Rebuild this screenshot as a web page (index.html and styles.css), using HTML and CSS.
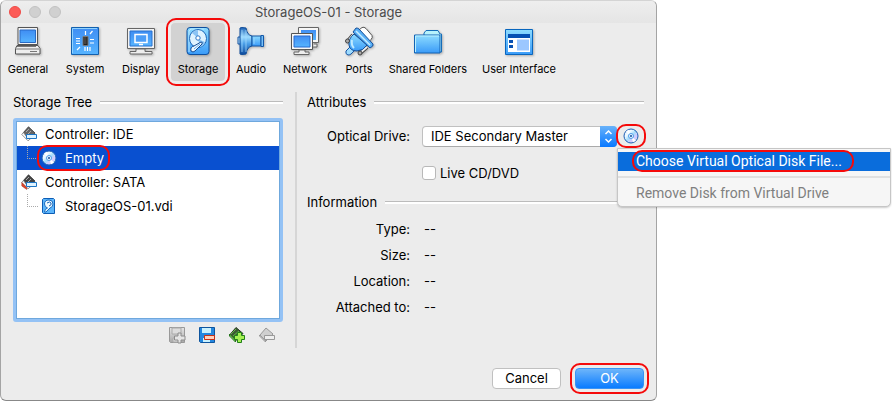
FILE: index.html
```html
<!DOCTYPE html>
<html lang="en">
<head>
<meta charset="utf-8">
<title>StorageOS-01 - Storage</title>
<link rel="stylesheet" href="styles.css">
</head>
<body>
<svg class="defs" aria-hidden="true">
  <defs>
    <linearGradient id="blue" x1="0" y1="0" x2="0" y2="1"><stop offset="0" stop-color="#3f8df3"/><stop offset="1" stop-color="#56b4ff"/></linearGradient>
    <linearGradient id="sky" x1="0" y1="0" x2="0" y2="1"><stop offset="0" stop-color="#8edcff"/><stop offset="1" stop-color="#3a9bf8"/></linearGradient>
    <linearGradient id="cone" x1="0" y1="0" x2="0" y2="1"><stop offset="0" stop-color="#1c62b6"/><stop offset=".35" stop-color="#9fdcff"/><stop offset=".6" stop-color="#4b9fe8"/><stop offset="1" stop-color="#0d4a9c"/></linearGradient>
    <linearGradient id="grey" x1="0" y1="0" x2="0" y2="1"><stop offset="0" stop-color="#e6e6e6"/><stop offset="1" stop-color="#a8a8a8"/></linearGradient>
    <linearGradient id="disc" x1="0" y1="0" x2="1" y2="1"><stop offset="0" stop-color="#b8d8ff"/><stop offset=".3" stop-color="#f4fbff"/><stop offset=".5" stop-color="#a5ddfb"/><stop offset=".7" stop-color="#d8c8ff"/><stop offset="1" stop-color="#9af0d8"/></linearGradient>
    <symbol id="cd" viewBox="0 0 16 16">
      <circle cx="8" cy="8" r="7" fill="url(#disc)" stroke="#1e5fb4"/>
      <path d="M8 8 3 3.500A7 7 0 0 1 6 2z" fill="#fff"/><path d="M8 8l5 4.500a7 7 0 0 1-3 1.500z" fill="#fff"/>
      <circle cx="8" cy="8" r="2.500" fill="#e8f6ff" stroke="#4e9be8"/><circle cx="8" cy="8" r="1" fill="#174a96"/>
    </symbol>
    <symbol id="disk" viewBox="0 0 28 28">
      <rect x="3" y=".5" width="22" height="27" rx="3" fill="url(#sky)" stroke="#0d4f9f"/>
      <path d="M5 25V4l2-2h13" fill="none" stroke="#b9e9ff"/>
      <ellipse cx="14" cy="11.500" rx="8.500" ry="9" fill="#dff3ff" stroke="#2069b8"/>
      <path d="M14 11 8 6q3-3 6-3zM14 12l7 3q-1 4-5 5z" fill="#8bc4f5"/>
      <circle cx="14" cy="11" r="2.200" fill="#fff" stroke="#2d78c8"/>
      <path d="M7 24q-1-4 3-5l7-4q2 0 1 2l-7 7q-2 2-4 0z" fill="#eaf7ff" stroke="#124b94"/>
      <path d="m10 22 6-5" stroke="#62a8e8"/>
    </symbol>
    <symbol id="disk-small" viewBox="0 0 16 16">
      <path d="M2.500.5h10l1 1v14h-11l-1-1v-13z" fill="#5bb5fb" stroke="#0d5db5"/>
      <path d="M8 2q4 0 4 4 0 3-3 4l-4 4H3.500q0-3 3-4-3-1-3-4 0-4 4.500-4z" fill="#eefaff" stroke="#1a6bc0"/>
      <path d="M6 5q3-2 4 0t-2 3" fill="none" stroke="#1a62b5"/>
    </symbol>
    <symbol id="controller" viewBox="0 0 16 16">
      <path d="M7.500.8 14 7l-3 4H4.500L2 7z" fill="currentColor" stroke="#333" stroke-width=".8"/>
      <path d="M2.500 6.500.8 8.500 7 14.800l3-2.500-3.500-.3z" fill="#fff" stroke="#777" stroke-width=".8"/>
      <path d="m5 6 3-3m-1 5 3-3" stroke="#aaa"/>
    </symbol>
  </defs>
</svg>

<main class="window">
  <header class="titlebar">
    <div class="lights"><i class="light close"></i><i class="light"></i><i class="light"></i></div>
    <h1>StorageOS-01 - Storage</h1>
  </header>

  <nav class="toolbar" aria-label="Settings pages">
    <button type="button"><svg viewBox="0 0 28 28">
      <path d="M4 .5h19.500v17H4z" fill="#f4f4f4" stroke="#555"/><path d="M6 3h15.500v12.500H6z" fill="url(#blue)" stroke="#286bc5"/>
      <path d="M3 18.500h21l2 3v5.500H1.500v-5.500z" fill="#eee" stroke="#555"/><path d="M2 22h23M16 24.500h7M3 19.500h19" stroke="#777"/>
    </svg><span>General</span></button>
    <button type="button"><svg viewBox="0 0 28 28">
      <path d="M.5.5h27v27H.5z" fill="url(#blue)" stroke="#1260ae"/><path d="M1.500 26V1.500H26" fill="none" stroke="#8fd2ff"/>
      <path d="M12 9.500h5v9h-5z" fill="#222" stroke="#777"/><path d="M12.500 10h3v7h-3z" fill="#474440"/>
      <path d="M5 11.500h4M5 14h4M5 16.500h4M19 12.500h4M19 16h4M14.500 4v4M19 7l2.500-3M6 23l3-3M14 20v4M16.500 20v4M19 20v4" stroke="#fff" stroke-width="1.200"/>
    </svg><span>System</span></button>
    <button type="button"><svg viewBox="0 0 28 28">
      <path d="M.5 1.500h27v20H.5z" fill="#f2f2f2" stroke="#666"/><path d="M3 4h22v15H3z" fill="url(#blue)" stroke="#2670ce"/>
      <path d="M8 7.500h12v8H8z" fill="#4c9df7" stroke="#fff" stroke-width="1.500"/><path d="M12 17.500h4" stroke="#fff" stroke-width="1.500"/><path d="M9 22h9v2.500h7v2.500H3v-2.500h6z" fill="#eee" stroke="#666"/>
    </svg><span>Display</span></button>
    <button type="button" class="current marked" aria-current="page"><svg><use href="#disk"/></svg><span>Storage</span></button>
    <button type="button"><svg viewBox="0 0 28 28">
      <path d="M3 10H1v7h2" fill="#b8e4ff" stroke="#1555a4"/><path d="M3 1q1-1 6 0 1 7 6 8v10q-5 1-6 8-5 1-6 0z" fill="url(#cone)" stroke="#104d9a"/>
      <path d="M15 9h9v10h-9z" fill="url(#sky)" stroke="#1458a8"/><path d="M24 8.500h2.500v11H24z" fill="#79c2fa" stroke="#1458a8"/><path d="M5 3v22M9 3v22M17 11v6" stroke="#a8dcff" opacity=".7"/>
    </svg><span>Audio</span></button>
    <button type="button"><svg viewBox="0 0 28 28">
      <path d="M7.500.5h20v15h-20z" fill="#f6f6f6" stroke="#666"/><path d="M10 3h15v10H10z" fill="url(#blue)"/><path d="M23 17h3v3h-4" fill="#eee" stroke="#666"/>
      <path d="M.5 6.500h21v16H.5z" fill="#f7f7f7" stroke="#555"/><path d="M3 9h16v11H3z" fill="url(#blue)" stroke="#266bd0"/><path d="M8 23h6v2h4v2.500H3v-2.500h5z" fill="#eee" stroke="#666"/>
    </svg><span>Network</span></button>
    <button type="button"><svg viewBox="0 0 28 28">
      <path d="m14 3 3-2.500q2-1 4 1l6 7q1 2-1 4l-2 2z" fill="#fff" stroke="#555"/>
      <path d="m5 20-4 4q-1 3 2 4 2 0 3-1l4-4z" fill="#9edcff" stroke="#1755a4"/>
      <path d="M8 8 3 14M22 20l-7 6" stroke="#444" stroke-width="4"/><path d="M8 8 3 14M22 20l-7 6" stroke="#eee" stroke-width="2"/>
      <path d="M9 7Q3 12 4 18q1 6 8 6 6 0 10-6z" fill="url(#sky)" stroke="#154f98"/>
      <path d="m8 5 3-4q2 0 3 1l14 15q1 2-3 4z" fill="#58aff6" stroke="#164f98"/><path d="m11 4 14 14" stroke="#c7edff" stroke-width="1.500"/><path d="M7 13q-1 5 2 8" stroke="#bfeaff" stroke-width="2" fill="none"/>
      <circle cx="2.500" cy="14" r="2" fill="#aaa" stroke="#444"/><circle cx="15" cy="26" r="2" fill="#aaa" stroke="#444"/>
    </svg><span>Ports</span></button>
    <button type="button"><svg viewBox="0 0 28 28">
      <path d="M10 8V6l2-2.500h12l2 3.500h1.500v18H26" fill="#b7f2fc" stroke="#166db9"/><path d="M.5 8h25.500v18H.5z" fill="url(#sky)" stroke="#1263b5"/>
      <path d="M1.500 25V9H25" fill="none" stroke="#baf0ff"/>
    </svg><span>Shared Folders</span></button>
    <button type="button"><svg viewBox="0 0 28 28">
      <path d="M.5 2.500h27v25H.5z" fill="url(#sky)" stroke="#0866be"/><path d="M3 7h22v18H3z" fill="#fff"/><path d="M3 7h22v4H3zM4 13h4v3H4zM4 18h4v3H4z" fill="#0650b3"/><path d="M12 12.500h12v11H12z" fill="#9cc7ff"/>
    </svg><span>User Interface</span></button>
  </nav>

  <div class="content">
    <section class="storage">
      <h2>Storage Tree</h2>
      <ul class="tree">
        <li><svg class="small" color="#666"><use href="#controller"/><path d="M5.500 8.500h10v4h-10z" fill="#dff3ff" stroke="#1d75c4"/></svg>Controller: IDE</li>
        <li class="child selected"><span class="entry marked"><svg class="small"><use href="#cd"/></svg>Empty</span></li>
        <li><svg class="small" color="#444"><use href="#controller"/><path d="m.8 8.500 5 5v2L.8 12z" fill="#e04428" stroke="#a02a18" stroke-width=".5"/><path d="M5.500 8.500h10v4h-10z" fill="#dff3ff" stroke="#1d75c4"/></svg>Controller: SATA</li>
        <li class="child"><span class="entry"><svg class="small"><use href="#disk-small"/></svg>StorageOS-01.vdi</span></li>
      </ul>
      <div class="actions">
        <button type="button" aria-label="Add attachment" disabled><svg class="small" viewBox="0 0 16 16"><path d="M.5.5h15v15h-14l-1-1z" fill="url(#grey)" stroke="#999"/><path d="M3 1h9v6H3zM4 11h7v4H4z" fill="#ddd" stroke="#aaa"/><path d="M9 6h3v3h4v4h-4v3H9v-3H5.500V9H9z" fill="#e5e5e5" stroke="#8c8c8c"/></svg></button>
        <button type="button" aria-label="Remove attachment"><svg class="small" viewBox="0 0 16 16"><path d="M.5.5h15v15h-14l-1-1z" fill="#2487df" stroke="#0e559e"/><path d="M3 1h9v5H3zM4 11h7v4H4z" fill="#c8f1ff"/><path d="M5.500 8.500h10v4h-10z" fill="#ffd1bd" stroke="#c92f13"/></svg></button>
        <button type="button" aria-label="Add controller"><svg class="small" viewBox="0 0 16 16"><path d="m7 .5 7 6-7 7-6-6z" fill="#3c5a34" stroke="#283a21"/><path d="m.5 7 6 6v2l-6-6z" fill="#8bd85f" stroke="#23751c"/><path d="m2 7 5-5m-3 7 6-5" stroke="#61b745"/><path d="M8.500 5.500h4v3h3v4h-3v3h-4v-3h-3v-4h3z" fill="#a5f052" stroke="#218019"/></svg></button>
        <button type="button" aria-label="Remove controller" disabled><svg class="small" viewBox="0 0 16 16"><path d="m7 1 7 6-7 7-6-6z" fill="#d0d0d0" stroke="#999"/><path d="m.5 8 6 6v1l-6-6z" fill="#fff" stroke="#999"/><path d="M5.500 8.500h10v4h-10z" fill="#eee" stroke="#999"/></svg></button>
      </div>
    </section>

    <section class="details">
      <h2>Attributes</h2>
      <div class="form">
        <label for="drive">Optical Drive:</label>
        <div class="drive">
          <div class="select"><select id="drive"><option>IDE Secondary Master</option></select><svg viewBox="0 0 16 21"><path d="m5 8 3-3 3 3M5 13l3 3 3-3" fill="none" stroke="#fff" stroke-width="1.500"/></svg></div>
          <div class="chooser">
            <button type="button" class="marked" aria-label="Choose disk"><svg class="small"><use href="#cd"/></svg></button>
            <div class="menu">
              <button type="button" class="active"><span class="marked">Choose Virtual Optical Disk File...</span></button>
              <hr>
              <button type="button" disabled><span>Remove Disk from Virtual Drive</span></button>
            </div>
          </div>
        </div>
        <label class="check"><input type="checkbox">Live CD/DVD</label>
      </div>
      <h2>Information</h2>
      <dl>
        <dt>Type:</dt><dd>--</dd>
        <dt>Size:</dt><dd>--</dd>
        <dt>Location:</dt><dd>--</dd>
        <dt>Attached to:</dt><dd>--</dd>
      </dl>
    </section>
  </div>

  <footer><button type="button">Cancel</button><button type="button" class="ok marked">OK</button></footer>
</main>
</body>
</html>
```
FILE: styles.css
```css
* { box-sizing: border-box; }
body {
  margin: 0;
  padding-right: 235px;
  background: #fff;
  color: #000;
  font: 13px/20px Inter, "Liberation Sans", sans-serif;
}
h1, h2, ul, dl, dd { margin: 0; padding: 0; font-size: 13px; font-weight: 400; }
button { padding: 0; border: 0; background: none; color: inherit; font: inherit; }
svg { display: block; flex: none; overflow: visible; }
.defs { position: absolute; width: 0; height: 0; }
.small { width: 16px; height: 16px; }

.marked { position: relative; }
.marked::after {
  content: "";
  position: absolute;
  inset: -5px;
  border: 2px solid #f50a0a;
  border-radius: 10px;
  pointer-events: none;
}

.window {
  display: flex;
  flex-direction: column;
  min-height: 100vh;
  border: 1px solid #a4a4a4;
  border-top-color: #d4d4d4;
  border-bottom-color: #888;
  border-radius: 6px;
  background: #ececec;
}
.titlebar {
  display: grid;
  grid-template-columns: 60px 1fr 60px;
  align-items: center;
  height: 22px;
  border-radius: 6px 6px 0 0;
  background: linear-gradient(#eee, #e5e5e5);
}
.titlebar h1 { color: #4b4b4b; text-align: center; }
.lights { display: flex; gap: 8px; padding-left: 8px; }
.light { width: 12px; height: 12px; border: 1px solid #c2c2c2; border-radius: 50%; background: #d0d0d0; }
.close { border-color: #ef4b47; background: #fc5b57; }

.toolbar {
  display: grid;
  grid-template-columns: 54px 52px 52px 54px 44px 56px 44px 86px 88px;
  gap: 4px;
}
.toolbar button {
  display: flex;
  flex-direction: column;
  align-items: center;
  gap: 6px;
  height: 58px;
  padding-top: 4px;
  border-radius: 4px;
  font-size: 11px;
  line-height: 16px;
  white-space: nowrap;
}
.toolbar svg { width: 28px; height: 28px; filter: drop-shadow(1px 1px 1px #0004); }
.toolbar .current { background: #d2d2d2; }

.content {
  display: grid;
  grid-template-columns: 284px 1fr;
  padding: 11px 12px 0;
}
h2 { display: flex; align-items: center; gap: 8px; height: 20px; }
h2::after { content: ""; flex: 1; height: 2px; border-top: 1px solid #bcbcbc; background: #fff; }
.storage { padding-right: 12px; border-right: 2px solid #d6d6d6; height: 256px; }
.tree {
  height: 204px;
  margin-top: 6px;
  border: 3px solid #94c2f5;
  border-radius: 3px;
  outline: 1px solid #6fa8dd;
  outline-offset: -4px;
  padding-top: 1px;
  background: #fff;
  list-style: none;
}
.tree li { display: flex; align-items: center; gap: 8px; height: 24px; margin: 0 1px; padding-left: 4px; }
.tree .child { gap: 3px; }
.tree .child::before { content: ""; width: 10px; height: 12px; margin: -12px 0 0 6px; border: dotted #aaa; border-width: 0 0 1px 1px; }
.entry { display: flex; align-items: center; gap: 8px; }
.entry.marked::after { inset: -3px -6px -3px -4px; }
.tree .selected { background: #0950d0; color: #fff; }
.actions { display: flex; justify-content: flex-end; gap: 14px; padding: 5px 8px 0; }

.details { padding-left: 10px; }
.form { display: grid; grid-template-columns: 103px 1fr; column-gap: 12px; row-gap: 14px; padding: 12px 0 8px; }
.form > label:first-child { text-align: right; line-height: 24px; }
.drive { display: flex; gap: 6px; align-items: center; height: 24px; }
.select { position: relative; flex: 1; }
.select select {
  display: block;
  width: 100%;
  height: 21px;
  padding: 0 20px 2px 8px;
  border: 1px solid #c0c0c0;
  border-bottom-color: #aaa;
  border-radius: 4px;
  background: #fff;
  color: #000;
  font: inherit;
  line-height: 18px;
  appearance: none;
}
.select svg { position: absolute; top: 0; right: 0; width: 17px; height: 21px; border-radius: 0 4px 4px 0; background: linear-gradient(#68b2fa, #0878ff); pointer-events: none; }
.chooser { position: relative; display: flex; width: 21px; }
.chooser > .marked::after { inset: -4px -7px; }
.menu {
  position: absolute;
  z-index: 1;
  top: 20px;
  left: -6px;
  width: 274px;
  padding: 3px 0 2px;
  border: 1px solid #c6c6c6;
  border-radius: 0 0 5px 5px;
  background: #f6f6f6;
  box-shadow: 0 1px 2px #0003;
  font-family: Roboto, "Liberation Sans", sans-serif;
  font-size: 14px;
}
.menu button { display: block; width: 100%; height: 19px; padding-left: 18px; text-align: left; line-height: 19px; white-space: nowrap; }
.menu .active { background: #0a6ddc; color: #fff; }
.menu .active .marked { display: inline-block; height: 19px; }
.menu .active .marked::after { inset: -2px -12px -1px -4px; }
.menu :disabled { color: #7f7f7f; height: 22px; line-height: 22px; }
.menu hr { height: 2px; margin: 5px 0 4px; border: 0; background: #e0e0e0; }
.check { grid-column: 2; justify-self: start; display: flex; align-items: center; gap: 4px; height: 22px; }
.check input { appearance: none; width: 14px; height: 14px; margin: 0; border: 1px solid #b8b8b8; border-radius: 3px; background: #fff; }
dl { display: grid; grid-template-columns: 103px 1fr; column-gap: 14px; padding-top: 4px; line-height: 26px; }
dt { text-align: right; }

footer { display: flex; justify-content: flex-end; gap: 14px; margin-top: auto; padding: 0 12px 11px; }
footer button { width: 69px; height: 21px; border: 1px solid #c0c0c0; border-radius: 4px; background: #fff; line-height: 19px; }
footer .ok { border-color: #3a93f5; background: linear-gradient(#6db5fa, #0a7bff); color: #fff; }
footer .marked::after { inset: -6px; }
```
